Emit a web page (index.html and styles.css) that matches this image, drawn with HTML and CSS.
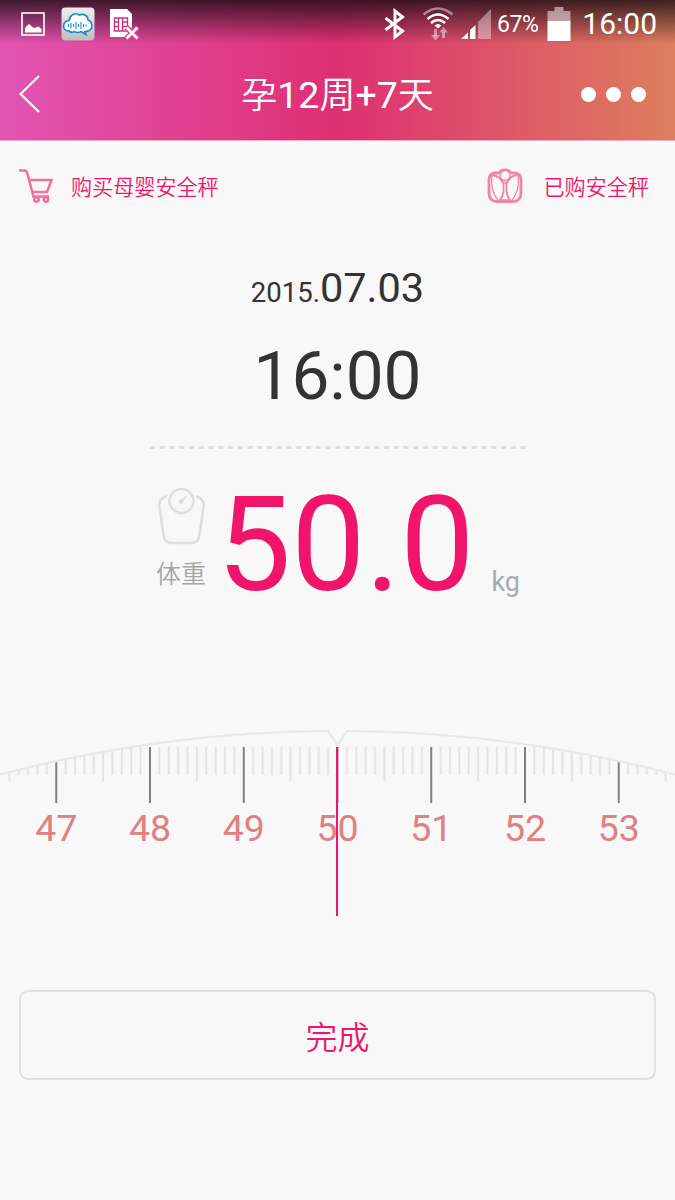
FILE: index.html
```html
<!DOCTYPE html>
<html lang="zh-CN">
<head>
    <meta charset="UTF-8">
    <meta name="viewport" content="width=device-width, initial-scale=1.0">
    <title>孕12周+7天</title>
    <link rel="stylesheet" href="styles.css">
</head>
<body>
    <header>
        <div class="status-bar">
            <div class="status-left">
                <svg width="24" height="24" viewBox="0 0 24 24">
                    <rect x="1" y="1" width="22" height="22" fill="none" stroke="#fff" stroke-width="1.6"/>
                    <path d="M4 20.500V16l4-4 4 3.500 2 .500 3-1.500 3.500 2.500v3.500z" fill="#fff"/>
                </svg>
                <svg class="cloud" width="34" height="34" viewBox="0 0 34 34">
                    <defs>
                        <linearGradient id="tile" x1="0" y1="0" x2="0" y2="1">
                            <stop offset="0" stop-color="#eee"/>
                            <stop offset="1" stop-color="#bdbdbd"/>
                        </linearGradient>
                    </defs>
                    <rect x=".5" y=".5" width="33" height="33" rx="4" fill="url(#tile)"/>
                    <path d="M8 24C.500 24 1 14.500 8 13.500 9 8 14 5 18 8c5-2 9 1 9 5 5 2 5.500 9 0 11-1 .500-2 .500-3 .500l1 3-5-3c-3 2-5 1-7 0-1 1-3 1-5-.500z" fill="#fff" stroke="#158bcd" stroke-width="1.600"/>
                    <path d="M7.500 17v3M10 16v5M12.500 17v3M15 15v7M17.500 17v3M20 15v7M22.500 17v3M25 17.500v2" stroke="#158bcd" stroke-width="1.100"/>
                </svg>
                <svg width="30" height="32" viewBox="0 0 30 32">
                    <path d="M1 1h17l5 5v13l-5 10H1z" fill="#fff"/>
                    <path d="M5.500 10h13v13h-13zM5.500 14h4M5.500 18.500h4M9.500 10v13M13.500 10v13M13.500 14h5M13.500 18.500h5" fill="none" stroke="#c3397f" stroke-width="1.400"/>
                    <path d="M17.500 19.500l11 11M28.500 19.500l-11 11" stroke="#da4795" stroke-width="5.500"/>
                    <path d="M17.500 19.500l11 11M28.500 19.500l-11 11" stroke="#fff" stroke-width="2.600"/>
                </svg>
            </div>
            <div class="status-right">
                <svg width="22" height="32" viewBox="0 0 22 32">
                    <path d="M1.500 10l17 13-7.500 6V3l7.500 6-17 13" fill="none" stroke="#fff" stroke-width="3"/>
                </svg>
                <svg class="wifi" width="32" height="34" viewBox="0 0 32 34">
                    <g fill="none" stroke="#fff" stroke-width="2.500">
                        <path d="M1.500 7.500q14.500-12 29 0" opacity=".45"/>
                        <path d="M5.500 12q10.500-9 21 0"/>
                        <path d="M9 16q7-6 14 0"/>
                    </g>
                    <path d="M12.500 18.500q3.500-3 7 0L16 21.500z" fill="#fff"/>
                    <path d="M13.500 22v7M21.500 31v-6" stroke="#fff" stroke-width="3" opacity=".45"/>
                    <path d="M9 28h9l-4.500 5.500zM17 25.500h9L21.500 20z" fill="#fff" opacity=".45"/>
                </svg>
                <svg class="signal" width="32" height="32" viewBox="0 0 32 32">
                    <path d="M1 31l7-6.500V31zM10 31v-9l5.500-5v14z" fill="#fff"/>
                    <path d="M18 31V14L31 1v30z" fill="#fff" opacity=".4"/>
                </svg>
                <span class="percent">67%</span>
                <svg class="battery" width="24" height="34" viewBox="0 0 24 34">
                    <path d="M.5 14V4H7.500V0h9v4h7v10z" fill="#fff" opacity=".5"/>
                    <path d="M.5 14h23v20H.5z" fill="#fff"/>
                </svg>
                <span class="clock">16:00</span>
            </div>
        </div>
        <div class="title-bar">
            <svg width="22" height="38" viewBox="0 0 22 38">
                <path d="M20 1L1.500 19 20 37" fill="none" stroke="#fff" stroke-width="2.200"/>
            </svg>
            <h1>孕<b>12</b>周<b>+7</b>天</h1>
            <div class="more"><i></i><i></i><i></i></div>
        </div>
    </header>

    <nav class="links">
        <a>
            <svg width="36" height="36" viewBox="0 0 36 36" fill="none" stroke="#f0709f" stroke-width="2.500">
                <path d="M1 2.500h5.500q2 0 2.700 2.500L15.500 28.500M11.500 12h22L29 24H14M14 28.500h17"/>
                <circle cx="18.500" cy="31.500" r="2.200"/>
                <circle cx="28" cy="31.500" r="2.200"/>
            </svg>
            <span>购买母婴安全秤</span>
        </a>
        <a>
            <svg width="36" height="36" viewBox="0 0 36 36" fill="none" stroke="#f283aa">
                <path d="M11 5H8Q2 5.500 2 12v13q0 8.500 8 8.500h16q8 0 8-8.500V12q0-6.500-6-7h-3" stroke-width="2.800"/>
                <path d="M11 6q2-4.500 7-4.500T25 6" stroke-width="2.200"/>
                <circle cx="18" cy="7.500" r="5" stroke-width="1.400"/>
                <path d="M5 7q9 1 11.500 9v7q-1 7-4.500 10M31 7q-9 1-11.500 9v7q1 7 4.500 10" stroke-width="1.800"/>
                <path d="M5 8q-2 14 6 24M31 8q2 14-6 24M13 11l3.500 4h3l3.500-4M14 32h8" stroke-width="1.300"/>
            </svg>
            <span>已购安全秤</span>
        </a>
    </nav>

    <main>
        <div class="date"><small>2015.</small>07.03</div>
        <div class="time">16:00</div>
        <svg class="divider" width="376" height="3">
            <path d="M0 1.500h376" stroke="#dedede" stroke-width="3" stroke-dasharray="5 4.750"/>
        </svg>

        <div class="weight">
            <div class="weight-label">
                <svg width="48" height="58" viewBox="0 0 48 58" fill="none" stroke="#dedede" stroke-width="2.500">
                    <circle cx="24.500" cy="14" r="12"/>
                    <path d="M10 9Q1 12 2.500 20l4 28q1 8 8 8h20q7 0 8-8l4-28q1-8-7.500-11"/>
                    <path d="M24.500 14l5-5" stroke-width="2"/>
                    <circle cx="24" cy="14.500" r="1.200"/>
                </svg>
                <span>体重</span>
            </div>
            <strong>50.0</strong>
            <span class="unit">kg</span>
        </div>

        <div class="ruler">
            <svg width="675" height="74" viewBox="0 0 675 74">
                <defs>
                    <pattern id="ticks" x="9.375" y="0" width="93.750" height="74" patternUnits="userSpaceOnUse">
                        <path d="M9.375 17v28M18.750 17v28M28.125 17v28M37.500 17v28M56.250 17v28M65.625 17v28M75 17v28M84.375 17v28M0 17v34M93.750 17v34" stroke="#e2e2e2" stroke-width="1.900"/>
                        <path d="M46.875 17v56" stroke="#808080" stroke-width="2"/>
                    </pattern>
                    <clipPath id="dial">
                        <path d="M0 45Q337.500-42 675 45V74H0z"/>
                    </clipPath>
                </defs>
                <rect width="675" height="74" fill="url(#ticks)" clip-path="url(#dial)"/>
                <path d="M0 44.500Q164 2 328 1l9.500 14L347 1Q511 2 675 44.500" fill="none" stroke="#e9e9e9" stroke-width="2.200"/>
            </svg>
            <div class="numbers">
                <span>47</span>
                <span>48</span>
                <span>49</span>
                <span>50</span>
                <span>51</span>
                <span>52</span>
                <span>53</span>
            </div>
            <div class="needle"></div>
        </div>

        <button>完成</button>
    </main>
</body>
</html>
```
FILE: styles.css
```css
* {
    margin: 0;
    padding: 0;
    box-sizing: border-box;
}
body {
    font-family: Roboto, 'Noto Sans CJK SC', sans-serif;
    background-color: #f8f8f8;
    color: #333;
    height: 1200px;
    overflow: hidden;
}
svg {
    display: block;
    flex: none;
}
header {
    height: 141px;
    color: #fff;
    background: linear-gradient(rgba(20, 10, 15, 0.8), rgba(20, 10, 15, 0) 44px), linear-gradient(90deg, #e255b3, #de2f72 50%, #dd7f5d);
    border-bottom: 1px solid #f0b0c8;
}
.status-bar {
    height: 48px;
    padding: 0 19px 0 21px;
    display: flex;
    justify-content: space-between;
    align-items: center;
}
.status-left, .status-right {
    display: flex;
    align-items: center;
}
.status-left {
    gap: 16px;
}
.status-left .cloud {
    margin-right: -2px;
}
.status-right .wifi {
    margin-left: 16px;
}
.status-right .signal {
    margin-left: 6px;
}
.percent {
    font-size: 23px;
    margin-left: 5px;
    letter-spacing: -0.5px;
}
.battery {
    margin-left: 9px;
}
.clock {
    font-size: 30px;
    margin: -2px 0 0 11px;
}
.status-right {
    margin-right: -1px;
}
.title-bar {
    height: 92px;
    padding: 0 28px 0 19px;
    display: grid;
    grid-template-columns: 66px 1fr 66px;
    align-items: center;
}
h1 {
    font-size: 36px;
    font-weight: 350;
    text-align: center;
    padding-left: 9px;
    margin-top: -4px;
}
h1 b {
    font-size: 37.5px;
    font-weight: 400;
}
.more {
    display: flex;
    gap: 10px;
}
.more i {
    width: 15px;
    height: 15px;
    border-radius: 50%;
    background-color: #fff;
}
.links {
    height: 91px;
    padding: 0 26px 0 18px;
    display: flex;
    justify-content: space-between;
    align-items: center;
}
.links a {
    display: flex;
    align-items: center;
    color: #f0156a;
    font-size: 21.1px;
    font-weight: 350;
    gap: 17px;
}
.links a + a {
    gap: 21px;
}
.links svg {
    margin-top: -1px;
}
.links span {
    margin-top: -2px;
}
main {
    display: flex;
    flex-direction: column;
    align-items: center;
}
.date {
    margin-top: 31px;
    font-size: 41.5px;
    line-height: 50px;
}
.date small {
    font-size: 27.5px;
}
.time {
    margin-top: 18px;
    font-size: 67.5px;
    line-height: 80px;
}
.divider {
    margin-top: 30px;
}
.weight {
    height: 150px;
    margin-top: 20px;
    padding-left: 1px;
    display: flex;
    align-items: flex-start;
}
.weight-label {
    width: 50px;
    margin-top: 18px;
    display: flex;
    flex-direction: column;
    align-items: center;
    font-size: 25px;
    font-weight: 350;
    line-height: 30px;
    color: #a6a6a6;
}
.weight-label span {
    margin-top: 15px;
}
.weight strong {
    margin: 1px 0 0 11px;
    font-size: 132px;
    font-weight: 400;
    line-height: 150px;
    color: #f0156a;
}
.unit {
    margin: 97px 0 0 17px;
    font-size: 27px;
    line-height: 32px;
    color: #aaa;
}
.ruler {
    position: relative;
    width: 675px;
    height: 186px;
    margin-top: 111px;
}
.numbers {
    padding: 0 9.375px;
    display: grid;
    grid-template-columns: repeat(7, 1fr);
    text-align: center;
    font-size: 37.5px;
    line-height: 48px;
    color: #e08080;
}
.needle {
    position: absolute;
    left: 336px;
    top: 17px;
    width: 2px;
    height: 169px;
    background-color: #f0156a;
}
button {
    width: 637px;
    height: 90px;
    margin-top: 74px;
    padding-bottom: 1px;
    border: 2px solid #e1e1e1;
    border-radius: 9px;
    background: none;
    color: #f0156a;
    font-family: inherit;
    font-size: 32px;
    font-weight: 350;
}
```
